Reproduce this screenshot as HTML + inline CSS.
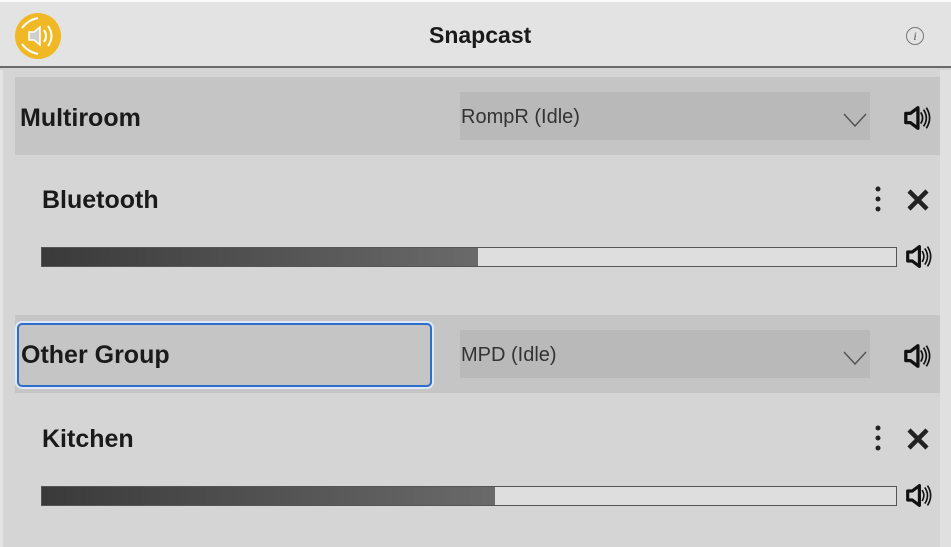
<!DOCTYPE html>
<html><head><style>
*{margin:0;padding:0;box-sizing:border-box}
body{width:951px;height:547px;background:#d5d5d5;font-family:"Liberation Sans",sans-serif;position:relative;overflow:hidden;color:#1a1a1a}
.a{position:absolute}
.hdr{left:0;top:2px;width:951px;height:66px;background:#e3e3e3;border-bottom:2px solid #6a6a6a}
.grp{left:15px;width:925px;height:78px;background:#c5c5c5}
.sel{left:460px;width:410px;height:48px;background:#b9b9b9;font-size:20px;color:#333;padding:14px 0 0 1px}
.name{font-size:25px;font-weight:bold}
.sl{left:41px;width:856px;height:20px;border:1.5px solid #555;background:#dedede}
.fill{position:absolute;left:0;top:0;bottom:0;background:linear-gradient(90deg,#3a3a3a,#6a6a6a)}
</style></head><body>
<div class="a" style="left:0;top:0;width:951px;height:2px;background:#fafafa"></div>
<div class="a hdr"></div>
<div class="a" style="left:0;top:70px;width:3px;height:477px;background:#e4e4e4"></div>
<div class="a" style="left:940px;top:70px;width:11px;height:477px;background:#e0e0e0"></div>
<svg class="a" style="left:14px;top:12px" width="48" height="48" viewBox="0 0 48 48">
<circle cx="24" cy="24" r="23" fill="#f0b824"/>
<path d="M15 20h5l6-5v18l-6-5h-5z" fill="#cfcfcf" stroke="#fff" stroke-width="1.5"/>
<g fill="none" stroke="#fff" stroke-width="2"><path d="M30 18q4 6 0 12"/><path d="M34 14q7 10 0 20"/><path d="M8 16q6-8 16-10"/><path d="M8 32q6 8 16 10"/></g>
</svg>
<div class="a" style="left:429px;top:22px;font-size:23px;font-weight:bold">Snapcast</div>
<div class="a" style="left:906px;top:27px;width:18px;height:18px;border:1px solid #777;border-radius:50%;font:italic 12px 'Liberation Serif',serif;text-align:center;line-height:16px;color:#555">i</div>

<div class="a grp" style="top:77px"></div>
<div class="a name" style="left:20px;top:104px">Multiroom</div>
<div class="a sel" style="top:92px">RompR (Idle)</div>

<div class="a grp" style="top:315px"></div>
<div class="a" style="left:17px;top:323px;width:415px;height:64px;border:2.5px solid #2f6ec9;border-radius:5px;box-shadow:0 0 0 2px #dde8f8"></div>
<div class="a name" style="left:21px;top:341px">Other Group</div>
<div class="a sel" style="top:330px">MPD (Idle)</div>

<svg class="a" style="left:842px;top:111px" width="26" height="18"><path d="M2 3l11 12 11-12" fill="none" stroke="#555" stroke-width="1.5"/></svg>
<svg class="a" style="left:842px;top:349px" width="26" height="18"><path d="M2 3l11 12 11-12" fill="none" stroke="#555" stroke-width="1.5"/></svg>

<div class="a name" style="left:42px;top:186px">Bluetooth</div>
<div class="a name" style="left:42px;top:425px">Kitchen</div>

<div class="a sl" style="top:247px"><div class="fill" style="width:436px"></div></div>
<div class="a sl" style="top:486px"><div class="fill" style="width:453px"></div></div>

<svg class="a" style="left:870px;top:185px" width="64" height="30"><g fill="#222"><circle cx="8" cy="4" r="2.5"/><circle cx="8" cy="14" r="2.5"/><circle cx="8" cy="24" r="2.5"/></g><path d="M39 6l18 18M57 6l-18 18" stroke="#222" stroke-width="4.5"/></svg>
<svg class="a" style="left:870px;top:424px" width="64" height="30"><g fill="#222"><circle cx="8" cy="4" r="2.5"/><circle cx="8" cy="14" r="2.5"/><circle cx="8" cy="24" r="2.5"/></g><path d="M39 6l18 18M57 6l-18 18" stroke="#222" stroke-width="4.5"/></svg>

<svg class="a" style="left:903px;top:104px" width="28" height="28" viewBox="0 0 30 28"><path d="M3 9h5l8-6v22l-8-6H3z" fill="none" stroke="#111" stroke-width="3.5" stroke-linejoin="round"/><g fill="none" stroke="#111" stroke-width="1.8"><path d="M19 8q4 6 0 12"/><path d="M22 5q6 9 0 18"/><path d="M25 3q7 11 0 22"/></g></svg>
<svg class="a" style="left:903px;top:342px" width="28" height="28" viewBox="0 0 30 28"><path d="M3 9h5l8-6v22l-8-6H3z" fill="none" stroke="#111" stroke-width="3.5" stroke-linejoin="round"/><g fill="none" stroke="#111" stroke-width="1.8"><path d="M19 8q4 6 0 12"/><path d="M22 5q6 9 0 18"/><path d="M25 3q7 11 0 22"/></g></svg>
<svg class="a" style="left:905px;top:243px" width="27" height="27" viewBox="0 0 30 28"><path d="M3 9h5l8-6v22l-8-6H3z" fill="none" stroke="#111" stroke-width="3.5" stroke-linejoin="round"/><g fill="none" stroke="#111" stroke-width="1.8"><path d="M19 8q4 6 0 12"/><path d="M22 5q6 9 0 18"/><path d="M25 3q7 11 0 22"/></g></svg>
<svg class="a" style="left:905px;top:482px" width="27" height="27" viewBox="0 0 30 28"><path d="M3 9h5l8-6v22l-8-6H3z" fill="none" stroke="#111" stroke-width="3.5" stroke-linejoin="round"/><g fill="none" stroke="#111" stroke-width="1.8"><path d="M19 8q4 6 0 12"/><path d="M22 5q6 9 0 18"/><path d="M25 3q7 11 0 22"/></g></svg>
</body></html>
